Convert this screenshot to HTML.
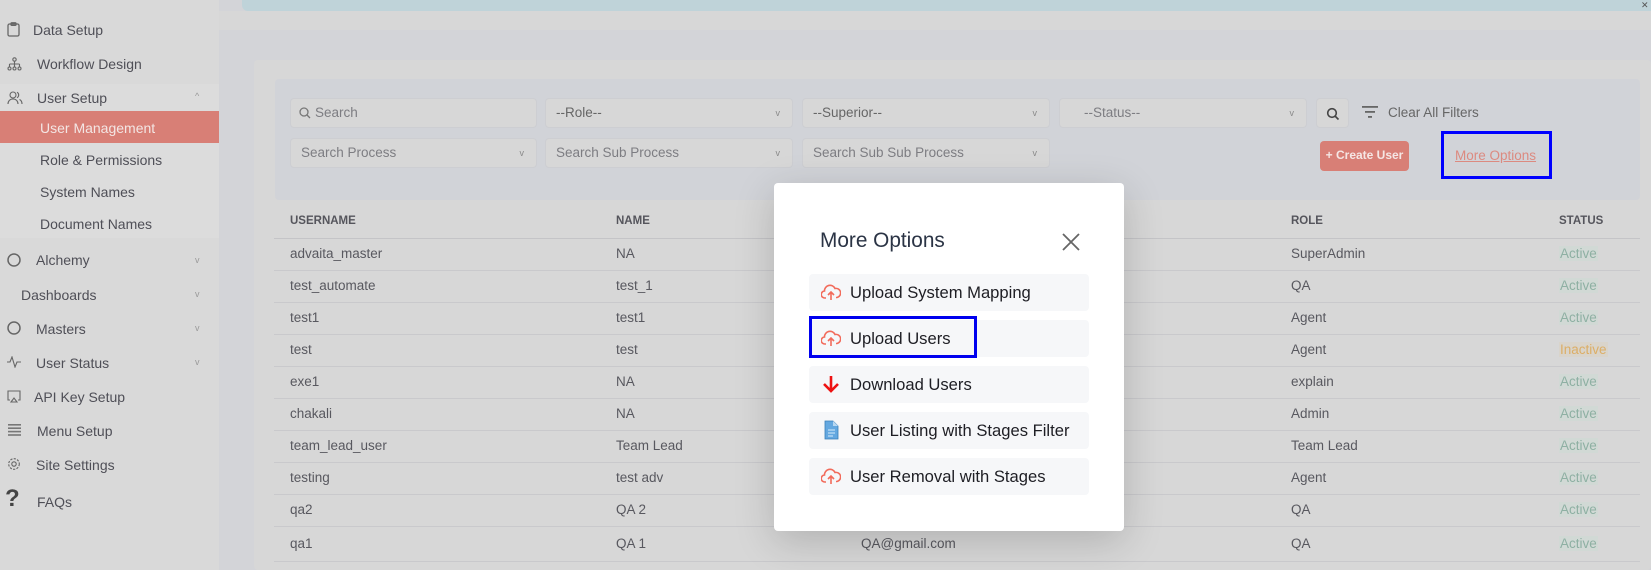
<!DOCTYPE html>
<html><head><meta charset="utf-8"><style>
*{box-sizing:border-box;margin:0;padding:0}
body{width:1651px;height:570px;overflow:hidden;background:#d3d4d8;font-family:"Liberation Sans",sans-serif;position:relative;color:#4a4a4f}
.abs{position:absolute}
.sb{left:0;top:0;width:219px;height:570px;background:#d9d9d9}
.si{position:absolute;font-size:14px;color:#4f4f57;white-space:nowrap}
.chev{position:absolute;left:195px;font-size:9px;color:#999}
.inp{position:absolute;background:#d7d7d7;border:1px solid #cdced2;border-radius:4px;height:30px;font-size:13.5px;color:#7d7d82;line-height:28px;padding-left:10px}
.inp .v{position:absolute;right:12px;top:0;font-size:9px;color:#888}
.th{position:absolute;top:215px;font-size:11.5px;font-weight:bold;color:#55555c}
.row{position:absolute;left:274px;width:1366px;height:1px;background:#c9c9cc}
.td{position:absolute;font-size:13.5px;color:#58585f}
.act{position:absolute;left:1559px;font-size:13.5px;color:#8eb0a3;background:#d1d9d5;padding:0 1px}
.modal{left:774px;top:183px;width:350px;height:348px;background:#fff;border-radius:4px;box-shadow:0 10px 40px rgba(0,0,0,.18)}
.it{position:absolute;left:35px;width:280px;height:37px;background:#f6f7f9;border-radius:4px;font-size:16.6px;color:#1e1e24;line-height:37px;padding-left:41px}
.it svg{position:absolute;left:12px;top:9px}
</style></head><body>
<div class="abs" style="left:242px;top:0;width:1409px;height:11px;background:#bfd3d9;border-radius:0 0 0 6px"></div>
<div class="abs" style="left:219px;top:11px;width:1432px;height:19px;background:#d7d7d7"></div>
<div class="abs" style="left:1641px;top:0;font-size:9px;color:#555">✕</div>
<div class="abs sb"></div>
<div class="abs" style="left:0;top:84px;width:219px;height:154px;background:#dcdcdc"></div>
<div class="abs" style="left:0;top:111px;width:219px;height:32px;background:#d87f76"></div>
<svg class="abs" style="left:7px;top:22px" width="13" height="15" viewBox="0 0 13 15" fill="none" stroke="#666" stroke-width="1.3"><rect x="1" y="2" width="11" height="12" rx="1.5"/><rect x="4" y="0.8" width="5" height="2.5" rx=".8"/></svg>
<svg class="abs" style="left:7px;top:57px" width="15" height="14" viewBox="0 0 15 14" fill="none" stroke="#666" stroke-width="1.1"><circle cx="7.5" cy="2.5" r="1.7"/><path d="M7.5 4.2V7M2.5 7h10M2.5 7v3M7.5 7v3M12.5 7v3"/><circle cx="2.5" cy="11.5" r="1.5"/><circle cx="7.5" cy="11.5" r="1.5"/><circle cx="12.5" cy="11.5" r="1.5"/></svg>
<svg class="abs" style="left:7px;top:91px" width="16" height="14" viewBox="0 0 16 14" fill="none" stroke="#666" stroke-width="1.1"><circle cx="6" cy="4" r="3"/><path d="M1 13c0-3 2-5 5-5s5 2 5 5M10 1.3a3 3 0 010 5.4M12.5 8.5c1.5.7 2.5 2.3 2.5 4.5"/></svg>
<svg class="abs" style="left:7px;top:253px" width="14" height="14"><circle cx="7" cy="7" r="6" fill="none" stroke="#666" stroke-width="1.5"/></svg>
<svg class="abs" style="left:7px;top:321px" width="14" height="14"><circle cx="7" cy="7" r="6" fill="none" stroke="#666" stroke-width="1.5"/></svg>
<svg class="abs" style="left:7px;top:356px" width="14" height="12" fill="none" stroke="#666" stroke-width="1.1"><path d="M0 6h3l2-5 3 10 2-5h4"/></svg>
<svg class="abs" style="left:7px;top:390px" width="14" height="13" fill="none" stroke="#666" stroke-width="1.1"><path d="M3 10H1V1h12v9h-2M4 12h6L7 8z"/></svg>
<svg class="abs" style="left:8px;top:424px" width="13" height="12" fill="#777"><rect y="0" width="13" height="1.6"/><rect y="3.4" width="13" height="1.6"/><rect y="6.8" width="13" height="1.6"/><rect y="10.2" width="13" height="1.6"/></svg>
<svg class="abs" style="left:7px;top:457px" width="14" height="14" fill="none" stroke="#666" stroke-width="1.1"><circle cx="7" cy="7" r="2.2"/><circle cx="7" cy="7" r="5.3" stroke-dasharray="2.2 1.3"/></svg>
<div class="si" style="left:5px;top:485px;font-size:24px;font-weight:bold;color:#444">?</div>
<div class="si" style="left:33px;top:22px">Data Setup</div>
<div class="si" style="left:37px;top:56px">Workflow Design</div>
<div class="si" style="left:37px;top:90px">User Setup</div><div class="chev" style="top:91px">^</div>
<div class="si" style="left:40px;top:120px;color:#f3e6e4">User Management</div>
<div class="si" style="left:40px;top:152px">Role &amp; Permissions</div>
<div class="si" style="left:40px;top:184px">System Names</div>
<div class="si" style="left:40px;top:216px">Document Names</div>
<div class="si" style="left:36px;top:252px">Alchemy</div><div class="chev" style="top:255px">v</div>
<div class="si" style="left:21px;top:287px">Dashboards</div><div class="chev" style="top:289px">v</div>
<div class="si" style="left:36px;top:321px">Masters</div><div class="chev" style="top:323px">v</div>
<div class="si" style="left:36px;top:355px">User Status</div><div class="chev" style="top:357px">v</div>
<div class="si" style="left:34px;top:389px">API Key Setup</div>
<div class="si" style="left:37px;top:423px">Menu Setup</div>
<div class="si" style="left:36px;top:457px">Site Settings</div>
<div class="si" style="left:37px;top:494px">FAQs</div>

<div class="abs" style="left:254px;top:60px;width:1397px;height:510px;background:#d7d7d7;border-radius:4px"></div>
<div class="abs" style="left:275px;top:79px;width:1365px;height:121px;background:#d1d3d8;border-radius:4px"></div>
<div class="inp" style="left:290px;top:98px;width:247px;padding-left:24px"><svg style="position:absolute;left:8px;top:8px" width="12" height="12" fill="none" stroke="#777" stroke-width="1.3"><circle cx="5" cy="5" r="4"/><path d="M8 8l3 3"/></svg>Search</div>
<div class="inp" style="left:545px;top:98px;width:248px;color:#666">--Role--<span class="v">v</span></div>
<div class="inp" style="left:802px;top:98px;width:248px;color:#666">--Superior--<span class="v">v</span></div>
<div class="inp" style="left:1059px;top:98px;width:248px;padding-left:24px">--Status--<span class="v">v</span></div>
<div class="inp" style="left:1316px;top:98px;width:33px;padding:0"><svg style="position:absolute;left:9px;top:8px" width="14" height="14" fill="none" stroke="#444" stroke-width="1.6"><circle cx="6" cy="6" r="4.3"/><path d="M9 9l3.5 3.5"/></svg></div>
<svg class="abs" style="left:1362px;top:106px" width="16" height="12" fill="#666"><rect width="16" height="1.8"/><rect x="3" y="5" width="10" height="1.8"/><rect x="6" y="10" width="4" height="1.8"/></svg>
<div class="abs" style="left:1388px;top:105px;font-size:13.5px;color:#666">Clear All Filters</div>
<div class="inp" style="left:290px;top:138px;width:247px">Search Process<span class="v">v</span></div>
<div class="inp" style="left:545px;top:138px;width:248px">Search Sub Process<span class="v">v</span></div>
<div class="inp" style="left:802px;top:138px;width:248px">Search Sub Sub Process<span class="v">v</span></div>
<div class="abs" style="left:1320px;top:141px;width:89px;height:30px;background:#d87f76;border-radius:4px;color:#f5e6e4;font-size:12px;font-weight:bold;line-height:28px;text-align:center">+ Create User</div>
<div class="abs" style="left:1441px;top:131px;width:111px;height:48px;border:3px solid #0000ff"></div>
<div class="abs" style="left:1455px;top:148px;font-size:13.5px;color:#dc8a80;text-decoration:underline">More Options</div>

<div class="th" style="left:290px">USERNAME</div><div class="th" style="left:616px">NAME</div><div class="th" style="left:1291px">ROLE</div><div class="th" style="left:1559px">STATUS</div>
<div class="row" style="top:238px;background:#c4c4c7"></div>
<div class="row" style="top:270px"></div><div class="row" style="top:302px"></div><div class="row" style="top:334px"></div><div class="row" style="top:366px"></div><div class="row" style="top:398px"></div><div class="row" style="top:430px"></div><div class="row" style="top:462px"></div><div class="row" style="top:494px"></div><div class="row" style="top:526px"></div><div class="row" style="top:561px"></div>

<div class="td" style="left:290px;top:246px">advaita_master</div><div class="td" style="left:616px;top:246px">NA</div><div class="td" style="left:1291px;top:246px">SuperAdmin</div><div class="act" style="top:246px">Active</div>
<div class="td" style="left:290px;top:278px">test_automate</div><div class="td" style="left:616px;top:278px">test_1</div><div class="td" style="left:1291px;top:278px">QA</div><div class="act" style="top:278px">Active</div>
<div class="td" style="left:290px;top:310px">test1</div><div class="td" style="left:616px;top:310px">test1</div><div class="td" style="left:1291px;top:310px">Agent</div><div class="act" style="top:310px">Active</div>
<div class="td" style="left:290px;top:342px">test</div><div class="td" style="left:616px;top:342px">test</div><div class="td" style="left:1291px;top:342px">Agent</div><div class="act" style="top:342px;color:#dcae66;background:#d9d4cb">Inactive</div>
<div class="td" style="left:290px;top:374px">exe1</div><div class="td" style="left:616px;top:374px">NA</div><div class="td" style="left:1291px;top:374px">explain</div><div class="act" style="top:374px">Active</div>
<div class="td" style="left:290px;top:406px">chakali</div><div class="td" style="left:616px;top:406px">NA</div><div class="td" style="left:1291px;top:406px">Admin</div><div class="act" style="top:406px">Active</div>
<div class="td" style="left:290px;top:438px">team_lead_user</div><div class="td" style="left:616px;top:438px">Team Lead</div><div class="td" style="left:1291px;top:438px">Team Lead</div><div class="act" style="top:438px">Active</div>
<div class="td" style="left:290px;top:470px">testing</div><div class="td" style="left:616px;top:470px">test adv</div><div class="td" style="left:1291px;top:470px">Agent</div><div class="act" style="top:470px">Active</div>
<div class="td" style="left:290px;top:502px">qa2</div><div class="td" style="left:616px;top:502px">QA 2</div><div class="td" style="left:1291px;top:502px">QA</div><div class="act" style="top:502px">Active</div>
<div class="td" style="left:290px;top:536px">qa1</div><div class="td" style="left:616px;top:536px">QA 1</div><div class="td" style="left:861px;top:536px">QA@gmail.com</div><div class="td" style="left:1291px;top:536px">QA</div><div class="act" style="top:536px">Active</div>

<div class="abs modal">
<div style="position:absolute;left:46px;top:46px;font-size:20.8px;color:#2b3445">More Options</div>
<svg style="position:absolute;left:288px;top:50px" width="18" height="18" stroke="#666" stroke-width="1.8"><path d="M1 1l16 16M17 1L1 17"/></svg>
<div class="it" style="top:91px"><svg width="20" height="18" fill="none" stroke="#f26b5b" stroke-width="1.6"><path d="M5 15H4a3.5 3.5 0 01-.5-7A5.5 5.5 0 0114 5.5a4 4 0 012 9h-1"/><path d="M10 17V9M7 12l3-3 3 3"/></svg>Upload System Mapping</div>
<div class="it" style="top:137px"><svg width="20" height="18" fill="none" stroke="#f26b5b" stroke-width="1.6"><path d="M5 15H4a3.5 3.5 0 01-.5-7A5.5 5.5 0 0114 5.5a4 4 0 012 9h-1"/><path d="M10 17V9M7 12l3-3 3 3"/></svg>Upload Users</div>
<div class="it" style="top:183px"><svg width="20" height="18" fill="none" stroke="#ee1111" stroke-width="2.6"><path d="M10 1v15M3 9l7 7 7-7"/></svg>Download Users</div>
<div class="it" style="top:229px"><svg width="20" height="20" style="top:8px"><path d="M4 1h8l5 5v13H4z" fill="#64a8e0" stroke="#3a7fb8" stroke-width=".8"/><path d="M12 1v5h5" fill="#b8d8f2"/><path d="M7 10h7M7 13h7M7 16h5" stroke="#d6ebfa" stroke-width="1"/></svg>User Listing with Stages Filter</div>
<div class="it" style="top:275px"><svg width="20" height="18" fill="none" stroke="#f26b5b" stroke-width="1.6"><path d="M5 15H4a3.5 3.5 0 01-.5-7A5.5 5.5 0 0114 5.5a4 4 0 012 9h-1"/><path d="M10 17V9M7 12l3-3 3 3"/></svg>User Removal with Stages</div>
<div style="position:absolute;left:35px;top:133px;width:168px;height:42px;border:3px solid #0000ee"></div>
</div>
</body></html>
